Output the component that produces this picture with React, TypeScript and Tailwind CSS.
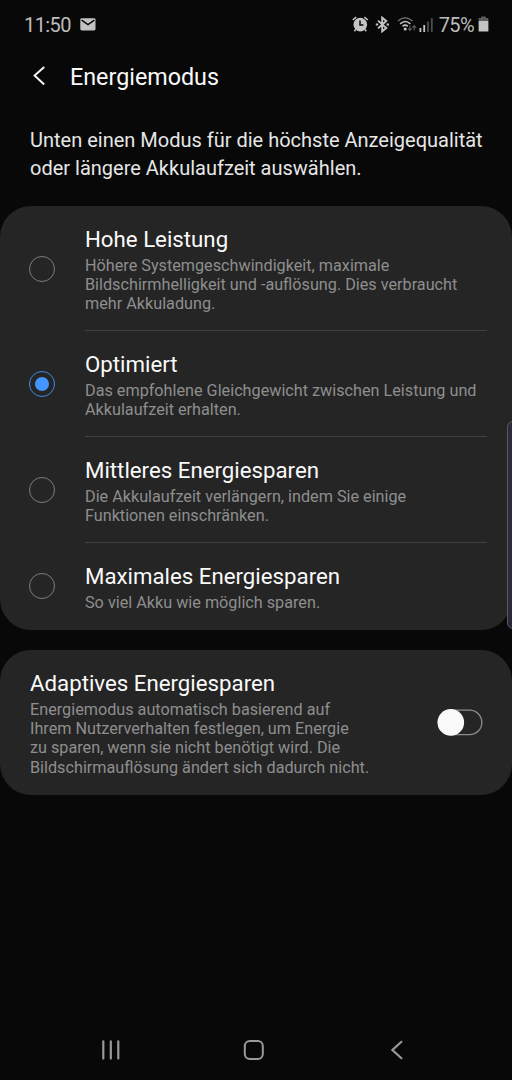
import { useState } from 'react'

interface Mode {
  id: string
  title: string
  lines: string[]
}

const modes: Mode[] = [
  {
    id: 'high',
    title: 'Hohe Leistung',
    lines: [
      'Höhere Systemgeschwindigkeit, maximale',
      'Bildschirmhelligkeit und -auflösung. Dies verbraucht',
      'mehr Akkuladung.',
    ],
  },
  {
    id: 'optimized',
    title: 'Optimiert',
    lines: ['Das empfohlene Gleichgewicht zwischen Leistung und', 'Akkulaufzeit erhalten.'],
  },
  {
    id: 'medium',
    title: 'Mittleres Energiesparen',
    lines: ['Die Akkulaufzeit verlängern, indem Sie einige', 'Funktionen einschränken.'],
  },
  {
    id: 'max',
    title: 'Maximales Energiesparen',
    lines: ['So viel Akku wie möglich sparen.'],
  },
]

const adaptiveLines = [
  'Energiemodus automatisch basierend auf',
  'Ihrem Nutzerverhalten festlegen, um Energie',
  'zu sparen, wenn sie nicht benötigt wird. Die',
  'Bildschirmauflösung ändert sich dadurch nicht.',
]

function Lines({ lines }: { lines: string[] }) {
  return (
    <p className="mt-[1.5px] whitespace-nowrap text-[16.22px] leading-[19.25px] text-[#8e8e8e]">
      {lines.map((line) => (
        <span key={line} className="block">
          {line}
        </span>
      ))}
    </p>
  )
}

function StatusBar() {
  return (
    <div className="flex h-[48px] items-center pl-[24px] pr-[23px] text-[20px] tracking-[-0.6px] text-[#bdbdbd]">
      <span className="w-[47px] pt-px leading-6">11:50</span>
      <svg className="ml-[9px]" width="16" height="13" viewBox="0 0 16 13">
        <rect x="0.3" y="0.3" width="15.2" height="12.2" rx="1.4" fill="#c2c2c2" />
        <path d="M1.6 2.2 L8 6.6 L14.4 2.2" fill="none" stroke="#080808" strokeWidth="1.5" />
      </svg>
      <div className="ml-auto flex items-center">
        {/* alarm */}
        <svg width="17" height="17" viewBox="0 0 17 17">
          <circle cx="8.3" cy="8.6" r="6.8" fill="#c4c4c4" />
          <path
            d="M0.8 4 L4.2 1.2 M12.4 1.2 L15.8 4 M3.6 13.4 L2.4 15.2 M13 13.4 L14.2 15.2"
            stroke="#c4c4c4"
            strokeWidth="1.6"
          />
          <path d="M8 4.6 V9 H11.4" fill="none" stroke="#080808" strokeWidth="1.5" />
        </svg>
        {/* bluetooth */}
        <svg className="ml-[6px]" width="15" height="17" viewBox="0 0 15 17">
          <path
            d="M3 4.6 L11.3 12 L7.2 15.4 V1.6 L11.3 5 L3 12.4"
            fill="none"
            stroke="#c4c4c4"
            strokeWidth="1.9"
          />
          <path d="M0.8 8.5 H3.2 M11.6 8.5 H14" stroke="#c4c4c4" strokeWidth="2" />
        </svg>
        {/* wifi */}
        <svg className="ml-[7px]" width="20" height="17" viewBox="0 0 20 17">
          <path d="M1 5 Q8 -1.6 15.6 5" fill="none" stroke="#6b6b6b" strokeWidth="1.5" />
          <path
            d="M3.2 7.8 Q8.2 3.2 13.4 7.8 M5.6 10.4 Q8.2 8 10.8 10.4"
            fill="none"
            stroke="#c4c4c4"
            strokeWidth="1.6"
          />
          <circle cx="8.2" cy="13" r="1.6" fill="#c4c4c4" />
          <path
            d="M13 9.6 V14 M11.2 12.4 L13 14.4 L14.8 12.4 M17.2 14.4 V10 M15.4 11.6 L17.2 9.6 L19 11.6"
            fill="none"
            stroke="#5c5c5c"
            strokeWidth="1.1"
          />
        </svg>
        {/* signal */}
        <svg className="ml-[2px]" width="15" height="17" viewBox="0 0 15 17">
          <path d="M1.4 12 V16 M5.2 9 V16" stroke="#c4c4c4" strokeWidth="1.8" />
          <path d="M9 5.4 V16 M12.8 2 V16" stroke="#4c4c4c" strokeWidth="1.8" />
        </svg>
        <span className="ml-[5px] pt-px leading-6">75%</span>
        {/* battery */}
        <svg className="ml-[4px]" width="11" height="16" viewBox="0 0 11 16">
          <path d="M3.2 0.4 H7.8 V2 H10.4 V5 H0.6 V2 H3.2 Z" fill="#5c5c5c" />
          <rect x="0.6" y="5" width="9.8" height="10.6" rx="0.6" fill="#c4c4c4" />
        </svg>
      </div>
    </div>
  )
}

function Radio({ checked }: { checked: boolean }) {
  return (
    <span
      className={`flex size-[26px] shrink-0 items-center justify-center rounded-full border-[1.5px] ${
        checked ? 'border-[#3f8ae6]' : 'border-[#7c7c7c]'
      }`}
    >
      {checked && <span className="size-[14px] rounded-full bg-[#4296ff]" />}
    </span>
  )
}

export default function App() {
  const [selected, setSelected] = useState('optimized')
  const [adaptive, setAdaptive] = useState(false)

  return (
    <div className="relative flex h-[1080px] w-[512px] flex-col overflow-hidden bg-[#080808] font-['Roboto',sans-serif]">
      <StatusBar />

      <header className="flex h-[56px] items-center pl-[32px]">
        <svg width="14" height="20" viewBox="0 0 14 20">
          <path d="M12.2 1 L2.6 9.6 L12.2 18.6" fill="none" stroke="#f5f5f5" strokeWidth="2" />
        </svg>
        <h1 className="ml-[24px] pt-px text-[23.3px] leading-7 text-[#fafafa]">Energiemodus</h1>
      </header>

      <p className="mt-[22px] whitespace-nowrap pl-[30px] text-[20px] leading-[28px] text-[#e6e6e6]">
        Unten einen Modus für die höchste Anzeigequalität
        <br />
        oder längere Akkulaufzeit auswählen.
      </p>

      <section className="mt-[24px] h-[424px] rounded-[31px] bg-[#252525]">
        {modes.map((mode, i) => (
          <button
            key={mode.id}
            className="flex w-full items-center pl-[29px] text-left"
            onClick={() => setSelected(mode.id)}
          >
            <Radio checked={selected === mode.id} />
            <div
              className={`ml-[30px] w-[402px] pt-[18px] pb-[17px] ${
                i < modes.length - 1 ? 'border-b border-[#414141]' : ''
              }`}
            >
              <h2 className="text-[22.25px] leading-[30px] text-[#fafafa]">{mode.title}</h2>
              <Lines lines={mode.lines} />
            </div>
          </button>
        ))}
      </section>

      <section className="mt-[20px] flex h-[145px] items-center justify-between rounded-[31px] bg-[#252525] pl-[30px] pr-[29px]">
        <div>
          <h2 className="text-[22.25px] leading-[30px] text-[#fafafa]">Adaptives Energiesparen</h2>
          <Lines lines={adaptiveLines} />
        </div>
        <button
          role="switch"
          aria-checked={adaptive}
          aria-label="Adaptives Energiesparen"
          className="flex h-[27px] w-[46px] items-center"
          onClick={() => setAdaptive(!adaptive)}
        >
          <svg width="46" height="27" viewBox="0 0 46 27" className={adaptive ? '-scale-x-100' : ''}>
            <rect x="1.5" y="1.2" width="43.3" height="24.4" rx="12.2" fill="none" stroke="#8c8c8c" strokeWidth="1.3" />
            <circle cx="13.8" cy="13.4" r="13.3" fill="#fafafa" />
          </svg>
        </button>
      </section>

      <nav className="mt-auto flex h-[60px] items-center pl-[101px]">
        <svg width="20" height="20" viewBox="0 0 20 20">
          <path
            d="M2.3 1.4 V18.6 M9.8 1.4 V18.6 M17.3 1.4 V18.6"
            stroke="#9a9a9a"
            strokeWidth="2.2"
            strokeLinecap="round"
          />
        </svg>
        <svg className="ml-[122px]" width="22" height="22" viewBox="0 0 22 22">
          <rect x="1.8" y="2.1" width="18" height="18" rx="5" fill="none" stroke="#9a9a9a" strokeWidth="2" />
        </svg>
        <svg className="ml-[125px]" width="14" height="20" viewBox="0 0 14 20">
          <path d="M11.4 1.8 L2.4 10 L11.4 18.2" fill="none" stroke="#9a9a9a" strokeWidth="2.2" strokeLinecap="round" />
        </svg>
      </nav>

      {/* edge panel handle */}
      <div className="absolute left-[507px] top-[421px] h-[208px] w-[12px] rounded-[6px] border border-[#5a5666] bg-[#2f2c3b]/90" />
    </div>
  )
}
